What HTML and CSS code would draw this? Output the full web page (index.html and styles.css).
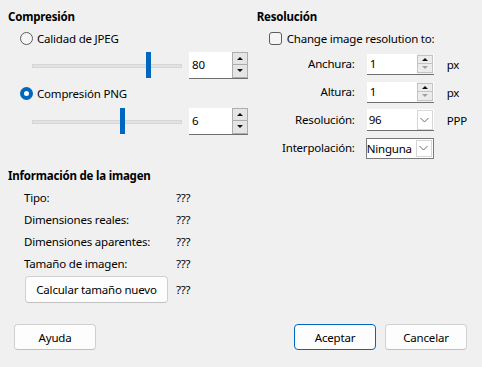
FILE: index.html
```html
<!DOCTYPE html>
<html lang="es">
<head>
<meta charset="utf-8">
<title>Compresión</title>
<link rel="stylesheet" href="styles.css">
</head>
<body>
<div class="dialog">
  <div class="top">
    <section class="col-left">
      <div class="heading">Compresión</div>
      <div class="option first"><span class="radio"></span><span>Calidad de JPEG</span></div>
      <div class="slider-row">
        <div class="slider"><div class="track"></div><div class="thumb" style="left:114px"></div></div>
        <div class="spin big">
          <div class="field">80</div>
          <div class="btns"><div class="sbtn"><span class="up"></span></div><div class="sbtn"><span class="down"></span></div></div>
        </div>
      </div>
      <div class="option second"><span class="radio checked"></span><span>Compresión PNG</span></div>
      <div class="slider-row">
        <div class="slider"><div class="track"></div><div class="thumb" style="left:88px"></div></div>
        <div class="spin big">
          <div class="field">6</div>
          <div class="btns"><div class="sbtn"><span class="up"></span></div><div class="sbtn"><span class="down"></span></div></div>
        </div>
      </div>
    </section>
    <section class="col-right">
      <div class="heading">Resolución</div>
      <div class="option first"><span class="check"></span><span>Change image resolution to:</span></div>
      <div class="form">
        <div class="lbl">Anchura:</div>
        <div class="spin small">
          <div class="field">1</div>
          <div class="btns"><div class="sbtn"><span class="up"></span></div><div class="sbtn dis"><span class="down"></span></div></div>
        </div>
        <div class="unit">px</div>

        <div class="lbl">Altura:</div>
        <div class="spin small">
          <div class="field">1</div>
          <div class="btns"><div class="sbtn"><span class="up"></span></div><div class="sbtn dis"><span class="down"></span></div></div>
        </div>
        <div class="unit">px</div>

        <div class="lbl">Resolución:</div>
        <div class="combo edit">
          <div class="cval">96</div>
          <div class="cbtn"><svg width="9" height="6" viewBox="0 0 9 6"><path d="M0.5 1 L4.5 5 L8.5 1" fill="none" stroke="#6a6a6a" stroke-width="1"/></svg></div>
        </div>
        <div class="unit">PPP</div>

        <div class="lbl">Interpolación:</div>
        <div class="combo list">
          <div class="cval">Ninguna</div>
          <div class="cbtn"><svg width="9" height="6" viewBox="0 0 9 6"><path d="M0.5 1 L4.5 5 L8.5 1" fill="none" stroke="#6a6a6a" stroke-width="1"/></svg></div>
        </div>
        <div class="unit"></div>
      </div>
    </section>
  </div>

  <section class="info">
    <div class="heading">Información de la imagen</div>
    <div class="irow"><span class="ilbl">Tipo:</span><span>???</span></div>
    <div class="irow"><span class="ilbl">Dimensiones reales:</span><span>???</span></div>
    <div class="irow"><span class="ilbl">Dimensiones aparentes:</span><span>???</span></div>
    <div class="irow"><span class="ilbl">Tamaño de imagen:</span><span>???</span></div>
    <div class="brow"><button class="btn calc">Calcular tamaño nuevo</button><span>???</span></div>
  </section>

  <div class="footer">
    <button class="btn">Ayuda</button>
    <div class="right">
      <button class="btn default">Aceptar</button>
      <button class="btn">Cancelar</button>
    </div>
  </div>
</div>
</body>
</html>
```

FILE: styles.css
```css
* { box-sizing: border-box; }
html, body {
  margin: 0;
  padding: 0;
  background: #f0f0f0;
}
body {
  font-family: "Noto Sans", "Open Sans", sans-serif;
  font-size: 11.5px;
  letter-spacing: -0.2px;
  color: #000;
  width: 482px;
  height: 367px;
  overflow: hidden;
}
.dialog {
  padding: 9px 15px 0 8px;
}
.top {
  display: flex;
}
.heading {
  height: 16px;
  line-height: 16px;
  font-weight: bold;
}
.col-left {
  width: 254px;
}
.col-right {
  flex: 1;
}
.option {
  display: flex;
  align-items: center;
  gap: 4px;
  height: 16px;
  padding-left: 12px;
}
.option.first { margin-top: 5px; }
.option.second { margin-top: 7px; }
.radio {
  width: 13px;
  height: 13px;
  border-radius: 50%;
  border: 1px solid #5c5c5c;
  background: #f5f5f5;
  flex: none;
}
.radio.checked {
  border: 4px solid #0067c0;
  background: #fff;
}
.check {
  width: 13px;
  height: 13px;
  border-radius: 3px;
  border: 1px solid #5c5c5c;
  background: #f5f5f5;
  flex: none;
  margin-right: 1px;
}
.slider-row {
  display: flex;
  align-items: center;
  gap: 7px;
  height: 26px;
  margin-top: 6px;
  padding-left: 24px;
}
.option.second + .slider-row { margin-top: 7px; }
.slider {
  position: relative;
  width: 150px;
  height: 26px;
}
.track {
  position: absolute;
  left: 0;
  right: 0;
  top: 12px;
  height: 4px;
  background: #e2e2e2;
  border: 1px solid #d6d6d6;
}
.thumb {
  position: absolute;
  top: 0;
  width: 5px;
  height: 26px;
  background: #0067c0;
}
.spin {
  display: flex;
  background: #fff;
  border-bottom: 1px solid #6e6e6e;
}
.spin .field {
  flex: 1;
  padding-left: 3px;
  display: flex;
  align-items: center;
}
.spin .btns {
  display: flex;
  flex-direction: column;
  background: #f0f0f0;
}
.sbtn {
  flex: 1;
  display: flex;
  align-items: center;
  justify-content: center;
  background: #e5e5e5;
  border: 1px solid #adadad;
}
.sbtn + .sbtn { border-top: none; }
.up, .down {
  width: 0;
  height: 0;
  border-left: 3px solid transparent;
  border-right: 3px solid transparent;
}
.up { border-bottom: 3px solid #111; }
.down { border-top: 3px solid #111; }
.sbtn.dis { background: #efefef; border-color: #cfcfcf; }
.sbtn.dis .down { border-top-color: #a0a0a0; }
.spin.big {
  width: 59px;
  height: 27px;
}
.spin.big .btns { width: 16px; }
.spin.small {
  width: 67px;
  height: 21px;
}
.spin.small .btns {
  width: 16px;
  padding: 1px 0 1px 0;
  margin-right: 1px;
}
.spin.small .sbtn { border-color: #c4c4c4; background: #ececec; }
.form {
  display: grid;
  grid-template-columns: 98px 67px auto;
  column-gap: 12px;
  align-items: center;
  margin-top: 7px;
}
.form .lbl {
  text-align: right;
  height: 22px;
  line-height: 22px;
}
.form .unit {
  padding-left: 1px;
}
.form > :nth-child(n+4) { margin-top: 6px; }
.form > :nth-child(n+10) { margin-top: 6px; }
.combo {
  display: flex;
  background: #fff;
}
.combo .cval {
  flex: 1;
  display: flex;
  align-items: center;
  padding-left: 2px;
}
.combo .cbtn {
  width: 16px;
  display: flex;
  align-items: center;
  justify-content: center;
  border: 1px solid #d6d6d6;
  background: #fff;
  margin: 1px 1px 1px 0;
}
.combo.edit {
  height: 22px;
  border-bottom: 1px solid #6e6e6e;
}
.combo.edit .cbtn { margin-bottom: 0; }
.combo.list {
  height: 21px;
  border: 1px solid #7a7a7a;
  width: 68px;
  margin-left: -1px;
}
.combo.list .cval { padding-left: 0; }
.info {
  margin-top: 9px;
}
.irow {
  display: flex;
  height: 22px;
  align-items: center;
  padding-left: 16px;
}
.info .heading + .irow { margin-top: 2px; }
.ilbl {
  width: 152px;
}
.brow {
  display: flex;
  align-items: center;
  gap: 8px;
  padding-left: 17px;
  margin-top: 2px;
}
.btn {
  font: inherit;
  letter-spacing: inherit;
  color: #000;
  background: #fdfdfd;
  border: 1px solid #d0d0d0;
  border-bottom-color: #c0c0c0;
  border-radius: 4px;
  height: 26px;
  width: 82px;
  padding: 0;
  margin: 0;
}
.btn.calc {
  width: 143px;
  height: 27px;
}
.btn.default {
  border: 1px solid #0067c0;
}
.footer {
  display: flex;
  justify-content: space-between;
  margin-top: 21px;
  padding-left: 6px;
}
.footer .right {
  display: flex;
  gap: 9px;
}
```
